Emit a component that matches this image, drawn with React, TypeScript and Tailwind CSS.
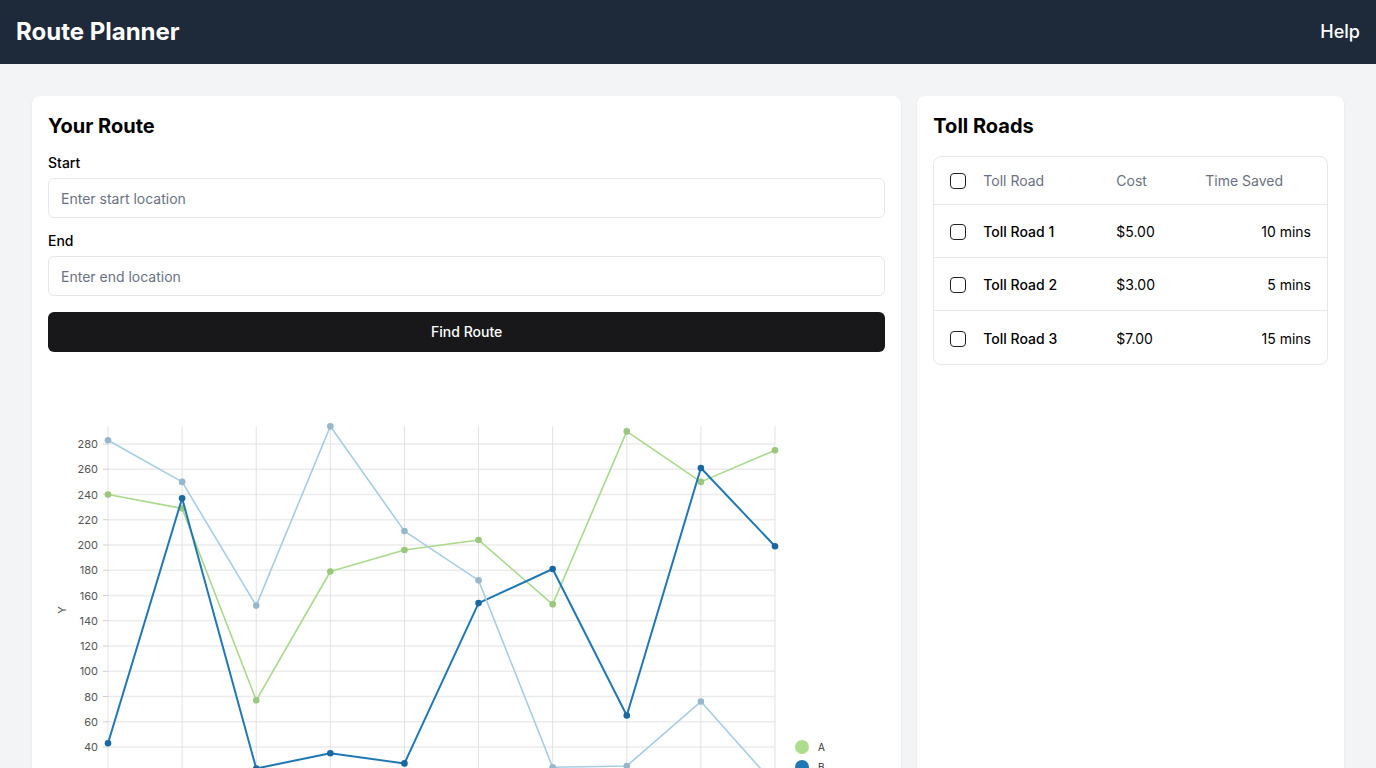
import React from 'react';

const tollRoads = [
    { id: 1, name: 'Toll Road 1', cost: '$5.00', saved: '10 mins' },
    { id: 2, name: 'Toll Road 2', cost: '$3.00', saved: '5 mins' },
    { id: 3, name: 'Toll Road 3', cost: '$7.00', saved: '15 mins' },
];

const series = [
    { name: 'A', line: '#a9d98b', dot: '#9ac77b', legend: '#addc8c', width: 1.6, values: [240, 229, 77, 179, 196, 204, 153, 290, 250, 275] },
    { name: 'B', line: '#1f78b4', dot: '#1a68a0', legend: '#1f78b4', width: 2, values: [43, 237, 23, 35, 27, 154, 181, 65, 261, 199] },
    { name: 'C', line: '#a6cde2', dot: '#97b8cc', legend: '#a6cde2', width: 1.6, values: [283, 250, 152, 294, 211, 172, 24, 25, 76, 10] },
];

const xAt = (i: number) => 60 + i * 74.11;
const yAt = (v: number) => 379 - (v - 40) * 1.2625;
const ticks = [0, 20, 40, 60, 80, 100, 120, 140, 160, 180, 200, 220, 240, 260, 280];

const Chart: React.FC = () => (
    <svg width="837" height="470" className="mt-4 block" style={{ fontFamily: 'Inter, sans-serif' }}>
        {/* grid */}
        {ticks.map(t => (
            <line key={t} x1={60} x2={727} y1={yAt(t)} y2={yAt(t)} stroke="#ebebeb" strokeWidth={1.5} />
        ))}
        {Array.from({ length: 10 }).map((_, i) => (
            <line key={i} x1={xAt(i)} x2={xAt(i)} y1={yAt(294)} y2={yAt(0)} stroke="#e2e2e2" strokeWidth={1} />
        ))}
        {/* y axis */}
        {ticks.map(t => (
            <g key={t}>
                <line x1={55} x2={60} y1={yAt(t)} y2={yAt(t)} stroke="#cfcfcf" />
                <text x={50} y={yAt(t) + 4} textAnchor="end" fontSize={11} fill="#555">{t}</text>
            </g>
        ))}
        <text x={18} y={242} fontSize={11} fill="#555" textAnchor="middle" transform="rotate(-90 18 242)">Y</text>
        {/* series */}
        {series.map(s => (
            <g key={s.name}>
                <polyline
                    points={s.values.map((v, i) => `${xAt(i)},${yAt(v)}`).join(' ')}
                    fill="none"
                    stroke={s.line}
                    strokeWidth={s.width}
                    strokeLinejoin="round"
                />
                {s.values.map((v, i) => (
                    <circle key={i} cx={xAt(i)} cy={yAt(v)} r={3.3} fill={s.dot} />
                ))}
            </g>
        ))}
        {/* legend */}
        {series.map((s, i) => (
            <g key={s.name}>
                <circle cx={754} cy={379 + i * 20} r={7} fill={s.legend} />
                <text x={770} y={383 + i * 20} fontSize={10} fill="#333">{s.name}</text>
            </g>
        ))}
    </svg>
);

const Checkbox: React.FC = () => (
    <span className="block w-4 h-4 rounded-[4px] border-[1.5px] border-[#222] bg-white shrink-0" />
);

export default function App() {
    return (
        <div className="min-h-screen bg-gray-100" style={{ fontFamily: 'Inter, "Noto Sans", sans-serif' }}>
            {/* Header */}
            <header className="h-16 bg-gray-800 text-white flex items-center justify-between px-4">
                <h1 className="text-2xl font-bold">Route Planner</h1>
                <a className="text-lg font-medium">Help</a>
            </header>

            <main className="p-8 grid grid-cols-3 gap-4">
                {/* Route form */}
                <section className="col-span-2 bg-white rounded-lg shadow-[0_1px_3px_rgba(0,0,0,0.08)] p-4 h-[720px] overflow-hidden">
                    <h2 className="text-xl font-bold text-black">Your Route</h2>
                    <label className="block mt-[13px] text-sm font-medium text-black">Start</label>
                    <input
                        className="mt-[5px] w-full h-10 rounded-md border border-gray-200 px-3 text-sm placeholder:text-gray-500 outline-none"
                        placeholder="Enter start location"
                    />
                    <label className="block mt-[13px] text-sm font-medium text-black">End</label>
                    <input
                        className="mt-[5px] w-full h-10 rounded-md border border-gray-200 px-3 text-sm placeholder:text-gray-500 outline-none"
                        placeholder="Enter end location"
                    />
                    <button className="mt-4 w-full h-10 rounded-md bg-zinc-900 text-white text-sm font-medium">
                        Find Route
                    </button>
                    <Chart />
                </section>

                {/* Toll roads */}
                <section className="bg-white rounded-lg shadow-[0_1px_3px_rgba(0,0,0,0.08)] p-4">
                    <h2 className="text-xl font-bold text-black">Toll Roads</h2>
                    <div className="mt-4 rounded-lg border border-gray-200 text-sm">
                        <div className="flex items-center h-[48px] px-4 text-gray-500 border-b border-gray-200">
                            <Checkbox />
                            <span className="ml-[17px] w-[133px]">Toll Road</span>
                            <span className="w-[89px]">Cost</span>
                            <span className="flex-1">Time Saved</span>
                        </div>
                        {tollRoads.map((road, idx) => (
                            <div
                                key={road.id}
                                className={`flex items-center h-[53px] pt-[2px] px-4 text-black ${idx < tollRoads.length - 1 ? 'border-b border-gray-200' : ''}`}
                            >
                                <Checkbox />
                                <span className="ml-[17px] w-[133px] font-medium">{road.name}</span>
                                <span className="w-[89px]">{road.cost}</span>
                                <span className="flex-1 text-right">{road.saved}</span>
                            </div>
                        ))}
                    </div>
                </section>
            </main>
        </div>
    );
}
